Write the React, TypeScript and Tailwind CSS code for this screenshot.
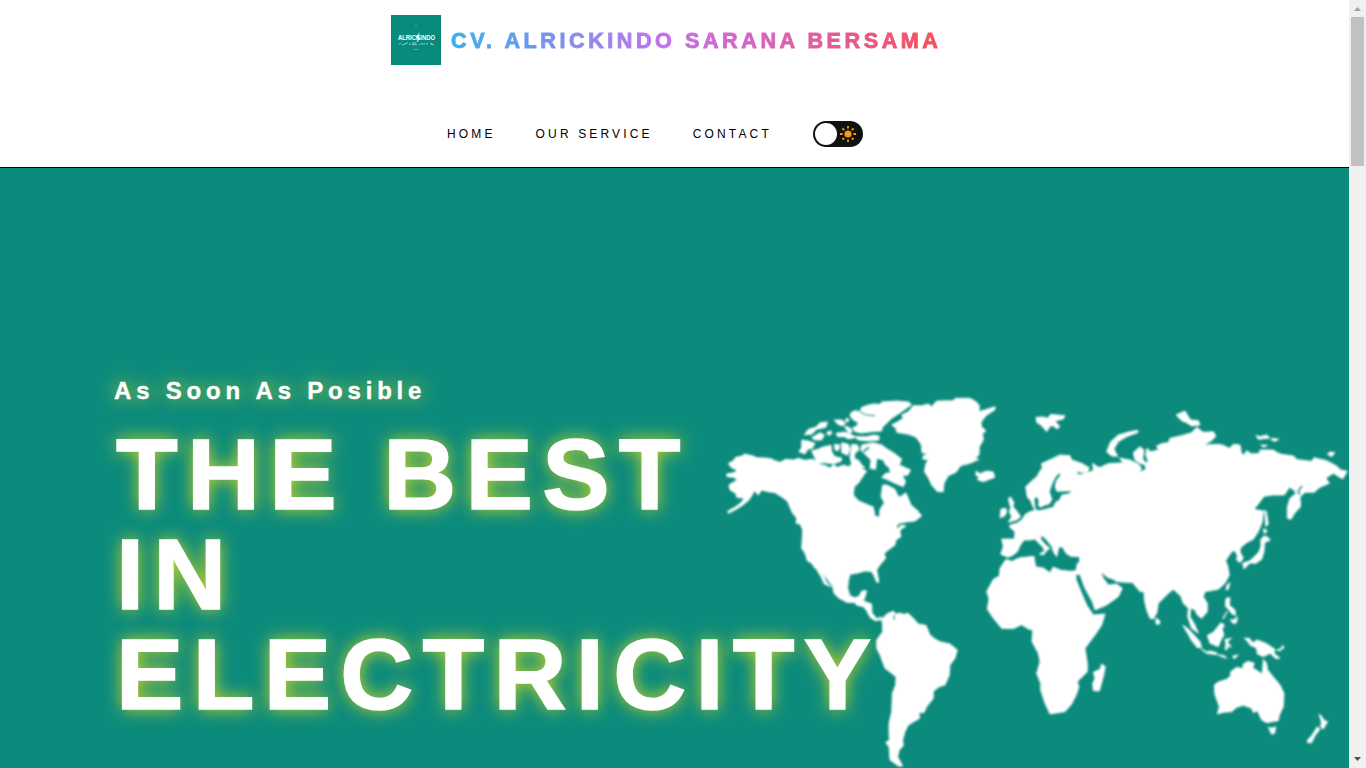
function WorldMap() {
  return (
    <svg
      viewBox="715 385 634 383"
      className="h-[383px] w-[634px] shrink-0 blur-[0.8px]"
      fill="#fff"
      stroke="#fff"
      strokeWidth="2.5"
      strokeLinejoin="round"
      aria-hidden="true"
    >
      {/* North America */}
      <g transform="translate(715 390) scale(0.33333)">
        <path d="M40 220L55 212L62 202L78 199L90 192L115 198L125 203L150 204L168 206L180 212L195 217L212 208L235 210L250 205L270 211L290 208L305 212L315 224L330 226L345 234L355 224L368 232L385 225L400 230L412 222L430 230L455 243L440 265L430 280L418 290L415 315L430 332L455 343L475 351L480 378L493 382L495 358L508 338L498 320L503 285L515 285L540 298L550 320L560 318L572 308L580 325L588 345L608 362L620 378L600 393L575 396L552 400L543 412L550 415L558 405L573 408L558 418L555 425L558 440L543 450L540 465L520 480L508 490L512 505L495 525L485 540L492 575L486 578L476 555L470 545L450 543L425 550L405 553L400 575L398 595L405 617L420 623L433 618L440 603L455 602L450 622L445 633L470 642L471 668L485 686L500 681L500 689L480 692L465 682L455 662L445 650L425 646L420 638L395 637L370 623L357 610L353 590L335 565L318 545L300 535L290 520L277 512L270 490L260 475L263 420L255 402L243 400L245 385L232 368L225 352L218 335L205 324L180 308L158 305L140 300L130 315L118 302L110 318L100 332L80 348L60 360L40 370L38 364L62 350L78 338L88 325L65 322L62 310L45 300L42 285L52 278L68 270L55 262L36 260L35 252L60 247L65 240L48 232Z" />
        <path d="M306 536L318 545L328 562L334 575L347 590L340 587L328 582L318 560L308 545Z" />
        <path d="M408 68L420 62L435 65L440 52L460 45L475 42L495 43L500 36L545 33L580 36L590 44L570 58L550 72L530 85L520 95L502 112L500 123L470 125L440 129L420 125L412 114L425 108L430 98L415 90L405 78Z" />
        <path d="M435 66L455 75L480 77" stroke="#0c8b7c" strokeWidth="3" fill="none" />
        <path d="M420 140L455 140L475 135L492 138L492 150L460 153L430 150Z" />
        <path d="M357 90L380 90L393 100L383 107L370 104Z" />
        <path d="M315 98L338 96L332 112L305 118L290 133L268 134L280 118L302 112Z" />
        <path d="M290 143L315 128L328 135L320 150L300 150ZM395 85L402 88L399 96L390 92ZM388 108L405 113L412 125L403 130L395 120ZM335 128L347 122L350 132L340 136Z" />
        <path d="M260 150L280 153L300 160L292 175L278 178L270 192L252 185L260 172Z" />
        <path d="M290 182L310 178L320 172L348 166L350 185L360 200L380 204L378 214L355 222L330 218L312 220L300 205Z" />
        <path d="M363 130L388 126L402 130L425 142L400 147L388 140L368 140ZM358 163L375 165L370 182L360 180ZM380 158L400 163L405 177L398 196L380 188Z" />
        <path d="M410 163L428 165L432 180L420 190L418 205L432 212L440 225L450 232L430 235L410 225L405 200Z" />
        <path d="M440 165L475 158L500 165L518 178L535 188L560 207L553 225L587 240L578 256L562 256L572 275L565 290L540 280L515 268L500 262L512 250L527 248L522 232L512 225L505 210L485 205L482 238L465 235L468 210L450 193L437 180Z" />
        <path d="M445 185L462 172M498 274L525 280L560 302" stroke="#0c8b7c" strokeWidth="5" fill="none" />
      </g>

      {/* Greenland, Iceland, Svalbard and Europe */}
      <g transform="translate(880 385) scale(0.33333)">
        <path d="M35 120L50 112L70 100L65 90L85 80L100 62L125 62L145 57L155 65L170 48L220 47L225 40L270 40L288 50L298 62L297 80L345 65L345 74L318 92L303 112L305 125L318 138L308 145L310 165L298 185L297 210L285 220L297 223L270 235L242 242L228 262L205 272L192 295L190 320L172 320L155 300L145 278L133 260L138 235L145 225L128 222L130 212L144 206L126 203L124 180L115 165L105 155L85 148L50 142L48 130Z" />
        <path d="M288 258L300 266L320 258L340 261L344 277L310 290L292 284L298 274L288 272Z" />
        <path d="M468 97L490 96L503 100L512 88L555 92L550 102L525 108L540 125L530 132L520 122L510 124L500 140L485 122L470 112Z" />
        <path d="M385 342L392 335L396 345L402 350L399 365L412 380L422 395L412 404L385 412L395 395L388 380L392 368ZM363 372L378 370L380 382L374 393L360 398Z" />
        <path d="M437 305L455 288L470 275L480 258L487 248L484 236L515 222L540 210L570 212L575 225L605 235L628 248L622 262L610 262L590 260L598 277L610 280L618 272L632 262L640 255L638 235L655 247L680 245L680 560L650 560L598 540L600 515L572 514L558 505L548 487L537 485L530 515L520 500L516 485L500 465L485 450L482 462L497 480L510 490L500 497L490 510L478 507L494 498L488 486L472 470L465 462L450 465L432 465L420 482L412 500L400 510L385 517L372 512L362 507L370 485L365 462L403 462L405 440L388 426L392 419L410 415L425 405L436 388L450 380L465 376L458 362L452 347L442 337Z" />
        <path d="M463 343L470 335L476 347L474 361L482 368L492 362L508 358L517 343L509 320L517 297L526 278L537 265L541 270L528 287L524 304L530 320L573 319L568 325L545 329L537 346L527 350L519 366L480 376L468 374L465 360Z" fill="#0c8b7c" stroke="none" />
      </g>

      {/* Asia */}
      <g transform="translate(1090 400) scale(0.33333)">
        <path d="M-35 225L0 215L12 213L10 193L23 208L45 195L60 190L75 190L100 188L88 174L120 180L145 192L155 205L148 217L168 208L165 195L150 190L135 180L130 158L150 140L162 150L158 175L166 188L175 184L167 165L171 145L182 155L205 150L200 138L217 130L235 128L240 115L270 108L305 98L320 82L340 97L370 95L378 108L365 122L340 135L385 133L400 136L418 145L430 133L450 135L455 162L462 165L470 152L485 162L508 160L510 150L550 150L562 158L575 163L610 168L622 179L665 184L672 173L710 182L740 198L752 210L772 214L758 237L730 220L708 234L718 250L690 262L672 277L645 277L630 292L632 320L615 338L603 358L592 355L592 320L600 295L618 280L612 270L598 262L583 285L550 285L522 289L508 308L492 328L520 333L517 365L505 395L490 418L470 428L452 443L450 455L460 475L450 488L440 480L442 465L432 450L422 460L407 482L413 497L418 525L405 550L385 568L345 575L340 590L352 610L352 635L335 655L322 645L315 630L302 624L300 650L315 675L325 700L305 685L293 650L295 625L280 610L272 588L250 568L235 580L205 610L200 640L190 657L180 655L170 630L163 600L162 575L150 575L128 548L80 545L70 538L52 532L32 515L40 535L55 555L80 552L97 565L85 590L50 615L15 630L7 605L-15 565L-30 525Z" />
        <path d="M50 155L62 125L85 105L120 95L142 91L145 97L110 110L85 125L72 147L83 169L65 168Z" />
        <path d="M258 45L285 33L292 45L302 60L325 62L330 75L305 78L290 68L275 62Z" />
        <path d="M498 106L510 110L530 105L540 114L505 118ZM545 115L567 118L555 124L545 121ZM512 135L533 136L520 142ZM712 162L720 156L735 158L725 170Z" />
        <path d="M524 330L529 335L535 372L527 380ZM520 386L532 392L523 402ZM520 409L530 409L541 420L524 428L522 455L515 478L498 490L480 489L462 507L458 490L480 482L497 466L507 455L513 438L512 420Z" />
        <path d="M636 258L624 275L630 284" stroke="#0c8b7c" strokeWidth="4" fill="none" />
      </g>

      {/* Africa */}
      <g transform="translate(970 540) scale(0.33333)">
        <path d="M108 58L125 64L150 53L192 49L197 80L220 84L240 98L250 81L270 90L300 94L318 92L322 70L330 68L330 103L318 103L318 118L335 160L350 195L370 225L405 222L395 255L375 285L345 325L352 370L352 395L322 425L327 440L320 462L305 492L285 515L240 522L225 490L212 450L212 430L200 400L210 365L205 340L186 305L188 270L175 267L155 254L130 266L95 265L70 235L52 208L57 175L50 155L70 118L88 108L90 85Z" />
        <path d="M395 372L406 380L400 410L388 453L370 452L368 430L375 415L370 397L390 388ZM558 234L570 243L568 253L558 252Z" />
      </g>

      {/* South America */}
      <g transform="translate(820 560) scale(0.33333)">
        <path d="M185 178L200 162L220 153L227 162L240 159L250 163L264 160L280 175L295 192L318 196L330 225L345 237L360 245L390 252L412 270L405 295L390 315L388 345L375 375L358 380L340 394L340 415L320 440L312 458L297 458L299 475L265 495L255 515L248 540L250 557L238 570L233 590L248 618L235 618L210 600L207 560L197 548L208 540L207 515L207 490L215 455L217 400L227 375L228 350L195 325L180 285L170 265L170 240L188 215L187 190Z" />
        <path d="M223 165L222 180" stroke="#0c8b7c" strokeWidth="3" />
      </g>

      {/* Oceania */}
      <g transform="translate(1120 550) scale(0.33333)">
        <path d="M188 226L203 235L220 253L240 275L245 293L232 293L215 272L203 250ZM243 297L262 306L270 303L290 308L290 314L260 310ZM292 314L313 317L320 325L305 320ZM338 318L355 315L342 327Z" />
        <path d="M262 256L280 247L303 218L313 225L307 238L312 255L302 272L295 290L270 280ZM315 268L335 265L322 275L334 292L325 288L320 300L315 298L318 283Z" />
        <path d="M318 145L330 143L328 165L345 180L347 197L334 190L325 178L316 168ZM330 210L342 209L352 200L350 217L342 222ZM320 107L330 97L325 118L318 120ZM322 183L308 205L311 206Z" />
        <path d="M372 265L388 265L398 278L412 270L440 281L465 298L462 310L480 325L468 326L450 310L430 320L412 312L410 295L390 285L382 273ZM470 300L485 295L487 285L492 293L478 303Z" />
        <path d="M283 405L295 396L320 388L332 377L332 365L350 352L368 356L370 342L385 334L403 340L398 353L427 372L430 328L440 340L442 358L455 375L480 405L492 430L490 470L478 495L475 512L440 518L425 510L412 482L400 488L395 475L370 466L350 472L335 485L310 487L292 492L298 470L285 435Z" />
        <path d="M445 532L455 535L467 530L464 550L455 553ZM597 492L606 500L612 511L623 515L610 537L602 532L604 515ZM592 530L600 538L585 557L575 578L563 578L562 571L575 557Z" />
      </g>
    </svg>
  );
}

function Logo() {
  return (
    <svg viewBox="0 0 50 50" className="size-[50px] shrink-0 tracking-normal" aria-hidden="true">
      <rect width="50" height="50" fill="#098b7b" />
      <text
        x="7"
        y="24.8"
        fill="#fff"
        fontFamily="Liberation Sans, sans-serif"
        fontWeight="700"
        fontSize="6.4"
        textLength="37"
        lengthAdjust="spacingAndGlyphs"
      >
        ALRICKINDO
      </text>
      <path d="M28.500 17L25 22.500L27 23.500L25.500 28L29.500 23L27.500 22Z" fill="#fff" />
      <path
        d="M8 29L10 28.5M11 30L14 29M14 29L17 27.5M18 30L20 28M21 28H25M21 29.6H26M28 30L29 28.5M30 29H34M35 29L37 28.5M39 28L41 29M40 29.5H43"
        stroke="#b5ddd8"
        strokeWidth=".8"
        fill="none"
      />
      <path d="M24 10.5H26M22 34.5H28" stroke="#6dbcb2" strokeWidth=".6" />
    </svg>
  );
}

function ThemeToggle() {
  return (
    <button className="ml-px flex h-[26px] w-[50px] items-center justify-between rounded-full bg-[#111] pr-[7px] pl-[2px]" aria-label="Theme">
      <span className="size-[22px] rounded-full bg-white" />
      <svg viewBox="0 0 16 16" className="size-4" stroke="#f39c12" strokeWidth="1.8">
        <circle cx="8" cy="8" r="3.6" fill="#f39c12" stroke="none" />
        <path d="M8 0V2.6M8 13.4V16M0 8H2.6M13.4 8H16M2.4 2.4L4.200 4.200M11.800 11.800L13.6 13.6M2.4 13.6L4.200 11.800M11.800 4.200L13.6 2.4" />
      </svg>
    </button>
  );
}

function Scrollbar() {
  return (
    <div className="flex h-full w-[17px] shrink-0 flex-col items-center bg-[#f0f0f0]">
      <svg viewBox="0 0 17 17" className="size-[17px] shrink-0">
        <path d="M5 11H12L8.500 7Z" fill="#a3a3a3" />
      </svg>
      <div className="h-[149px] w-[13px] bg-[#c1c1c1]" />
      <svg viewBox="0 0 17 17" className="mt-auto size-[17px] shrink-0">
        <path d="M5 6H12L8.500 10Z" fill="#505050" />
      </svg>
    </div>
  );
}

export default function App() {
  return (
    <div className="flex h-[768px] w-[1366px] overflow-hidden bg-white font-['Liberation_Sans',Arial,sans-serif]">
      <div className="flex h-full w-[1349px] flex-col">
        <header className="h-[168px] shrink-0 border-b border-black">
          <div className="flex pt-[15px] pl-[391px]">
            <a className="flex h-[50px] items-center gap-[10px] bg-linear-to-r/srgb from-[#12c2e9] via-[#c471ed] to-[#f64f59] bg-clip-text text-[21.6px] font-bold tracking-[3.55px] whitespace-nowrap text-transparent [-webkit-text-stroke:0.9px_transparent]">
              <Logo />
              <span className="pt-[2px] leading-[50px]">CV. ALRICKINDO SARANA BERSAMA</span>
            </a>
          </div>
          <nav className="mt-[56px] flex h-[26px] items-center gap-10 pl-[447px] text-[12px] tracking-[3.15px] whitespace-nowrap text-black">
            <a>HOME</a>
            <a>OUR SERVICE</a>
            <a>CONTACT</a>
            <ThemeToggle />
          </nav>
        </header>
        <main className="flex min-h-0 flex-1 bg-[#0c8b7c]">
          <div className="z-10 w-[715px] shrink-0 pt-[208px] pl-[114px] font-bold text-white [text-shadow:0_0_17px_rgba(240,230,20,0.9)]">
            <p className="text-[24px] leading-[30px] tracking-[4.8px] [-webkit-text-stroke:0.4px_white]">As Soon As Posible</p>
            <h1 className="mt-[18px] pl-[2px] text-[101px] leading-[100px] tracking-[9.3px] [-webkit-text-stroke:1.6px_white]">
              THE BEST IN ELECTRICITY
            </h1>
          </div>
          <div className="flex items-end">
            <WorldMap />
          </div>
        </main>
      </div>
      <Scrollbar />
    </div>
  );
}
